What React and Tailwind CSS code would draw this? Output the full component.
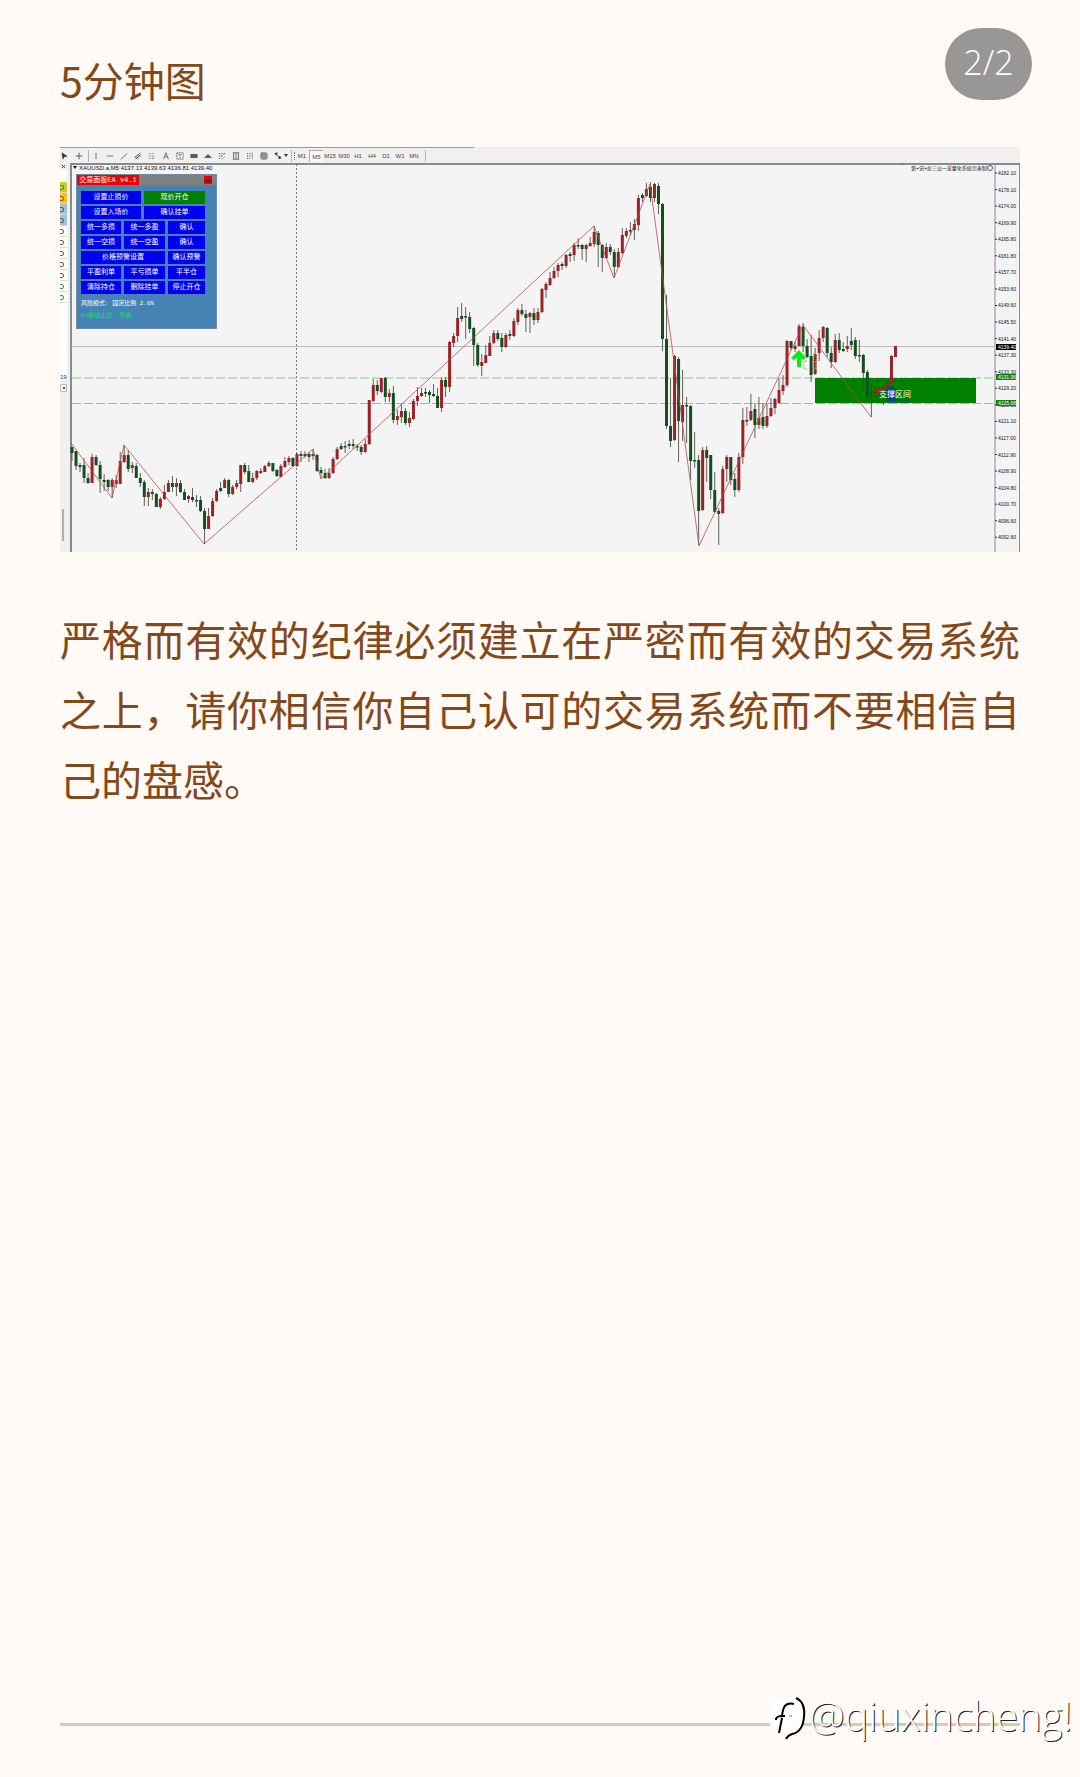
import { Grid3x3, MousePointer2, Plus, X } from 'lucide-react';

// Each candle: [direction, high, body top, body bottom, low], in chart units
const CANDLES = [
  ['g', 447, 447, 453, 461], ['g', 451, 451, 466, 470], ['g', 463, 465, 467, 472], ['g', 458, 465, 478, 483],
  ['g', 473, 478, 483, 484], ['r', 454, 457, 483, 483], ['g', 455, 457, 465, 466], ['g', 461, 465, 479, 493],
  ['g', 474, 480, 482, 491], ['g', 479, 480, 487, 491], ['r', 478, 480, 487, 498], ['r', 475, 480, 484, 488],
  ['r', 452, 461, 484, 484], ['r', 445, 455, 462, 463], ['g', 450, 455, 469, 472], ['r', 462, 465, 468, 473],
  ['g', 463, 466, 478, 478], ['g', 473, 478, 483, 487], ['g', 480, 482, 497, 506], ['r', 488, 492, 497, 506],
  ['g', 489, 492, 494, 500], ['g', 493, 494, 507, 507], ['r', 497, 499, 507, 509], ['r', 485, 492, 499, 500],
  ['r', 480, 483, 492, 492], ['g', 476, 483, 487, 492], ['r', 478, 483, 487, 496], ['g', 480, 483, 492, 493],
  ['g', 489, 492, 500, 500], ['r', 495, 496, 499, 503], ['g', 488, 497, 500, 502], ['g', 495, 500, 501, 507],
  ['g', 496, 500, 511, 512], ['g', 508, 511, 529, 544], ['r', 508, 516, 529, 529], ['r', 498, 501, 516, 517],
  ['r', 489, 491, 501, 502], ['g', 482, 488, 491, 492], ['r', 478, 480, 488, 488], ['g', 479, 480, 494, 497],
  ['r', 485, 487, 494, 495], ['r', 480, 483, 487, 489], ['r', 465, 465, 484, 492], ['g', 463, 465, 472, 474],
  ['g', 465, 471, 482, 482], ['r', 473, 478, 482, 483], ['r', 470, 471, 478, 480], ['r', 468, 471, 473, 474],
  ['r', 465, 466, 472, 472], ['r', 461, 463, 466, 467], ['g', 463, 463, 471, 472], ['g', 469, 470, 476, 477],
  ['r', 464, 466, 477, 477], ['r', 457, 461, 467, 468], ['r', 456, 458, 462, 465], ['g', 457, 458, 466, 467],
  ['r', 453, 454, 466, 467], ['g', 451, 454, 456, 462], ['g', 451, 454, 456, 458], ['g', 452, 454, 457, 462],
  ['r', 449, 454, 456, 460], ['g', 454, 455, 471, 472], ['g', 467, 470, 473, 478], ['g', 469, 473, 478, 479],
  ['r', 468, 473, 478, 479], ['r', 457, 459, 473, 474], ['r', 447, 449, 459, 460], ['g', 443, 446, 449, 450],
  ['g', 441, 446, 447, 453], ['g', 440, 444, 446, 449], ['g', 439, 444, 446, 449], ['g', 444, 446, 447, 451],
  ['g', 445, 447, 452, 455], ['r', 439, 444, 452, 453], ['r', 400, 400, 444, 445], ['r', 379, 385, 401, 402],
  ['g', 380, 385, 391, 395], ['r', 378, 378, 392, 393], ['g', 377, 378, 397, 402], ['r', 389, 393, 397, 402],
  ['g', 386, 393, 420, 423], ['r', 410, 416, 420, 425], ['r', 404, 411, 417, 423], ['g', 408, 411, 423, 425],
  ['r', 412, 418, 423, 427], ['r', 399, 401, 419, 420], ['r', 387, 396, 401, 406], ['r', 388, 393, 396, 397],
  ['g', 388, 392, 393, 397], ['g', 390, 392, 395, 403], ['g', 384, 394, 396, 397], ['g', 388, 396, 408, 408],
  ['r', 377, 380, 408, 412], ['g', 377, 380, 387, 397], ['r', 341, 342, 387, 392], ['r', 333, 336, 343, 347],
  ['r', 307, 318, 336, 342], ['g', 303, 316, 319, 322], ['g', 307, 316, 317, 339], ['g', 312, 317, 329, 333],
  ['g', 327, 328, 345, 366], ['g', 343, 345, 365, 367], ['r', 354, 362, 366, 376], ['r', 345, 355, 363, 363],
  ['r', 336, 343, 356, 356], ['r', 330, 333, 343, 344], ['g', 330, 333, 339, 341], ['g', 333, 338, 347, 352],
  ['r', 333, 335, 347, 348], ['g', 330, 334, 336, 340], ['r', 318, 321, 336, 337], ['r', 308, 310, 322, 325],
  ['g', 304, 310, 314, 316], ['g', 310, 314, 318, 332], ['r', 312, 313, 317, 333], ['g', 308, 313, 320, 325],
  ['r', 308, 312, 320, 323], ['r', 288, 289, 312, 313], ['r', 282, 284, 290, 298], ['r', 272, 278, 285, 286],
  ['r', 267, 271, 278, 279], ['r', 263, 265, 271, 277], ['g', 262, 264, 266, 270], ['r', 254, 255, 266, 268],
  ['g', 252, 254, 256, 262], ['r', 243, 245, 255, 261], ['g', 238, 245, 246, 249], ['g', 244, 245, 249, 260],
  ['r', 244, 245, 249, 262], ['r', 237, 243, 246, 247], ['r', 226, 232, 244, 247], ['g', 231, 233, 245, 267],
  ['g', 244, 245, 258, 272], ['r', 243, 247, 258, 259], ['g', 244, 247, 252, 255], ['g', 249, 252, 267, 278],
  ['r', 248, 252, 267, 268], ['r', 228, 235, 253, 254], ['r', 228, 231, 236, 238], ['g', 222, 230, 231, 235],
  ['r', 219, 224, 230, 240], ['r', 195, 198, 225, 231], ['g', 193, 195, 198, 202], ['r', 183, 189, 196, 197],
  ['g', 182, 187, 198, 202], ['r', 183, 184, 198, 202], ['g', 183, 186, 204, 214], ['g', 203, 204, 339, 351],
  ['g', 295, 339, 426, 429], ['g', 378, 426, 441, 447], ['r', 355, 356, 440, 441], ['g', 357, 359, 421, 462],
  ['r', 370, 405, 422, 441], ['g', 397, 405, 406, 443], ['g', 405, 406, 461, 480], ['g', 432, 460, 461, 468],
  ['g', 455, 460, 511, 545], ['r', 447, 450, 510, 511], ['g', 446, 450, 458, 482], ['g', 455, 455, 490, 499],
  ['g', 472, 490, 512, 513], ['g', 508, 511, 514, 545], ['r', 466, 469, 513, 514], ['r', 455, 457, 469, 482],
  ['g', 457, 457, 480, 485], ['g', 473, 479, 490, 497], ['r', 453, 457, 490, 492], ['r', 408, 420, 457, 464],
  ['g', 407, 420, 421, 426], ['r', 394, 411, 420, 421], ['g', 403, 409, 425, 438], ['r', 397, 418, 425, 429],
  ['g', 403, 417, 426, 429], ['r', 403, 416, 426, 428], ['r', 398, 408, 416, 417], ['r', 398, 399, 408, 414],
  ['r', 378, 390, 403, 404], ['r', 375, 385, 391, 395], ['r', 340, 341, 385, 387], ['g', 341, 341, 348, 350],
  ['r', 342, 346, 349, 352], ['r', 324, 326, 346, 346], ['g', 323, 327, 346, 352], ['g', 339, 346, 357, 358],
  ['g', 335, 356, 375, 382], ['r', 348, 354, 374, 375], ['r', 330, 338, 353, 361], ['r', 326, 327, 338, 342],
  ['g', 327, 328, 353, 357], ['g', 347, 353, 362, 368], ['r', 334, 340, 362, 363], ['g', 333, 340, 350, 353],
  ['g', 342, 349, 351, 352], ['r', 336, 346, 349, 352], ['g', 328, 341, 345, 350], ['g', 337, 340, 356, 359],
  ['g', 340, 355, 356, 362], ['g', 354, 355, 373, 387], ['g', 370, 372, 396, 400], ['g', 385, 395, 396, 417],
  ['r', 387, 390, 394, 398], ['r', 385, 389, 393, 402], ['r', 386, 388, 392, 405], ['r', 380, 383, 388, 390],
  ['r', 355, 356, 383, 384], ['r', 346, 346, 357, 357],
];

const FIRST_X = 72;
const STEP = 4.017;

const ZIGZAG = '71,443 112,498 124,445 204,544 313,449 321,479 594,226 614,278 650,184 699,546 803,325 871,417';

const PRICES = [
  '4182.10', '4178.10', '4174.00', '4169.90', '4165.80', '4161.80', '4157.70', '4153.60',
  '4149.60', '4145.50', '4141.40', '4137.30', '4133.30', '4129.20', '4125.10', '4121.10',
  '4117.00', '4112.90', '4108.90', '4104.80', '4100.70', '4096.60', '4092.60',
];

const PRICE_TAGS = [
  { y: 347, label: '4139.40', fill: '#000' },
  { y: 377, label: '4131.96', fill: '#128012' },
  { y: 403, label: '4125.68', fill: '#128012' },
];

const PANEL_ROWS = [
  { cols: 'grid-cols-[60px_61px]', labels: ['设置止损价', '现价开仓'] },
  { cols: 'grid-cols-[60px_61px]', labels: ['设置入场价', '确认挂单'] },
  { cols: 'grid-cols-[40px_41px_37px]', labels: ['统一多损', '统一多盈', '确认'] },
  { cols: 'grid-cols-[40px_41px_37px]', labels: ['统一空损', '统一空盈', '确认'] },
  { cols: 'grid-cols-[84px_37px]', labels: ['价格预警设置', '确认预警'] },
  { cols: 'grid-cols-[40px_41px_37px]', labels: ['平盈利单', '平亏损单', '平半仓'] },
  { cols: 'grid-cols-[40px_41px_37px]', labels: ['清除持仓', '删除挂单', '停止开仓'] },
];

const TIMEFRAMES = ['M1', 'M5', 'M15', 'M30', 'H1', 'H4', 'D1', 'W1', 'MN'];

const RAIL_ROWS = [
  { bg: 'bg-[#c9cf2a]', dot: 'border-[#6b7a10]' },
  { bg: 'bg-[#fcc419]', dot: 'border-[#b5480f]' },
  { bg: 'bg-[#9cc6e0]', dot: 'border-[#5f5560]' },
  { bg: 'bg-[#9cc6e0]', dot: 'border-[#5f5560]' },
  { bg: 'bg-white', dot: 'border-[#b0442e]' },
  { bg: 'bg-white', dot: 'border-[#b0442e]' },
  { bg: 'bg-white', dot: 'border-[#b0442e]' },
  { bg: 'bg-white', dot: 'border-[#b0442e]' },
  { bg: 'bg-white', dot: 'border-[#b0442e]' },
  { bg: 'bg-white', dot: 'border-[#3f9a3f]' },
  { bg: 'bg-white', dot: 'border-[#3f9a3f]' },
];

// Small drawing-tool glyphs, each on a 10x10 grid
const TOOLS = [
  { name: '垂直线', d: 'M5 1V9' },
  { name: '水平线', d: 'M1 5H9' },
  { name: '趋势线', d: 'M1 9L9 2' },
  { name: '通道', d: 'M1 7L8 1M2 9L9 3M3 5L6 8M5 3L8 6M1 5L4 9' },
  { name: '斐波那契', d: 'M1 2H9M1 5H9M1 8H7M7 6V9', dash: '1 1' },
  { name: '文字', d: 'M2 9L5 1L8 9M3 6H7' },
  { name: '文字标签', d: 'M1 1H9V9H1ZM3 3H7M5 3V8', dash: '2 1' },
  { name: '矩形', d: 'M1 3H9V7H1Z', fill: '#555' },
  { name: '三角形', d: 'M5 3L9 7H1Z', fill: '#555' },
  { name: '扇形', d: 'M1 2H9M1 5H5M1 9L8 2M5 9L9 5', dash: '2 1' },
  { name: '周期线', d: 'M2 1V9M5 1V9M8 1V9M1 1H9M1 9H9' },
  { name: '时间区', d: 'M2 1V6M5 1V6M8 1V9M1 8H5', dash: '2 1' },
];

function ToolIcon({ tool }) {
  return (
    <svg viewBox="0 0 10 10" className="size-[8px]" fill={tool.fill || 'none'} stroke="#555" strokeDasharray={tool.dash}>
      <path d={tool.d} />
    </svg>
  );
}

function Toolbar() {
  return (
    <div className="flex h-4 items-center bg-[#f0f0f0] font-['Liberation_Sans',sans-serif] text-[6px] text-[#444]">
      <div className="flex h-full items-center border-t border-[#9a9a9a] pr-12">
        <button aria-label="光标" className="flex w-3 justify-start">
          <MousePointer2 className="size-[8px] rotate-12" fill="#333" />
        </button>
        <button aria-label="十字线" className="flex w-[14px] justify-center">
          <Plus className="size-[10px]" strokeWidth={2} />
        </button>
        <span className="ml-[2px] h-3 border-l border-[#b5b5b5]" />
        {TOOLS.map(tool => (
          <button key={tool.name} aria-label={tool.name} className="flex w-[14px] justify-center">
            <ToolIcon tool={tool} />
          </button>
        ))}
        <button aria-label="网格" className="flex w-[14px] justify-center">
          <Grid3x3 className="size-[8px]" strokeWidth={2} />
        </button>
        <button aria-label="箭头" className="flex w-5 items-center justify-center gap-[2px]">
          <svg viewBox="0 0 10 10" className="size-[8px]" fill="#333" stroke="#333">
            <path d="M1 2L4 1L3 4ZM3 3L6 6M6 6H8V8H6Z" />
          </svg>
          <svg viewBox="0 0 4 3" className="h-[3px] w-1">
            <path d="M0 0H4L2 3Z" fill="#333" />
          </svg>
        </button>
        <span className="h-3 border-l border-[#b5b5b5]" />
        <span className="ml-[2px] h-2 border-l border-dotted border-[#777]" />
        {TIMEFRAMES.map(tf => (
          <button
            key={tf}
            className={`h-3 w-[14px] text-center leading-[12px] ${tf === 'M5' ? 'border-t border-l border-[#aaa] bg-[#f8f8f8]' : ''}`}
          >
            {tf}
          </button>
        ))}
        <span className="ml-1 h-3 border-l border-[#b5b5b5]" />
      </div>
    </div>
  );
}

function SideRail() {
  return (
    <div className="flex w-[10px] shrink-0 flex-col bg-[#f0f0f0] pr-[3px] text-[#333]">
      <button aria-label="关闭" className="flex h-[7px] items-center justify-center">
        <X className="size-[5px]" strokeWidth={4} />
      </button>
      <div className="h-[210px] bg-white pt-[12px]">
        {RAIL_ROWS.map((row, i) => (
          <div key={i} className={`flex h-[11px] items-center border-b border-[#dcdcb8] ${row.bg}`}>
            <span className={`h-[5px] w-[4px] rounded-r-full border border-l-0 ${row.dot}`} />
          </div>
        ))}
        <p className="pt-[69px] font-['Liberation_Sans',sans-serif] text-[6px] leading-[10px]">19</p>
      </div>
      <button aria-label="关闭导航" className="mt-1 flex h-[8px] items-center justify-center border border-[#bbb] bg-white">
        <X className="size-[4px]" strokeWidth={5} />
      </button>
      <div className="ml-[2px] mt-auto mb-[11px] h-8 w-[2px] bg-[#b0b0b0]" />
    </div>
  );
}

function Candle({ index, candle }) {
  const [dir, high, top, bottom, low] = candle;
  const x = FIRST_X + index * STEP;
  const color = dir === 'r' ? '#9c2226' : '#12501f';
  return (
    <g>
      <line x1={x} x2={x} y1={high} y2={low} stroke="#3a3a36" strokeWidth="0.8" />
      <rect x={x - 1.5} y={top} width="3" height={Math.max(bottom - top, 1.5)} fill={color} />
    </g>
  );
}

function PriceChart() {
  return (
    <svg
      viewBox="70 163 950 389"
      className="block w-full font-['Liberation_Sans','Noto_Sans_CJK_SC',sans-serif]"
      role="img"
      aria-label="XAUUSD 5分钟K线图"
    >
      <rect x="70" y="163" width="950" height="389" fill="#f4f4f4" />
      <path d="M71 552V164H1020" fill="none" stroke="#8a8a8a" strokeWidth="2" />
      <path d="M995 163V552M1019.500 163V552" stroke="#8a8a8a" />
      <text x="79" y="170" fontSize="6" fill="#111">XAUUSD.a,M5  4137.13 4139.63 4136.81 4139.40</text>
      <path d="M73 166H77L75 169Z" fill="#111" />
      <text x="911" y="170" fontSize="5" fill="#111">第+记+总三公一采量化系统完善制</text>
      <circle cx="990" cy="168" r="2.500" fill="none" stroke="#333" strokeWidth="0.8" />
      <path d="M899 163H904L901.500 165Z" fill="#777" />

      <line x1="296.500" x2="296.500" y1="164" y2="552" stroke="#777" strokeDasharray="2 2" />
      <line x1="71" x2="995" y1="346.500" y2="346.500" stroke="#bcbcbc" />
      <line x1="72" x2="995" y1="378" y2="378" stroke="#8fc48f" strokeDasharray="9 3" />
      <line x1="72" x2="995" y1="403.500" y2="403.500" stroke="#8fc48f" strokeDasharray="9 3" />

      <rect x="815" y="378" width="161" height="25" fill="#008000" />
      {CANDLES.map((candle, i) => (
        <Candle key={i} index={i} candle={candle} />
      ))}
      <polyline points={ZIGZAG} fill="none" stroke="#b0504e" strokeWidth="0.8" />
      <path d="M799 350L806 358L803 360L801 358V367H797V358L794 360L791 358Z" fill="#0be81b" />
      <path d="M805 353V358M807 361H804V369H808M814 353V357M812 362H816V369H812" fill="none" stroke="#7fd068" strokeDasharray="2 1" />
      <path d="M891 386L897 391L895 394V401H887V394L885 391Z" fill="#0a3a9a" />
      <path d="M896 400H909" stroke="#0a5a4a" strokeWidth="2" strokeDasharray="3 1" />
      <text x="879" y="397" fontSize="8" fill="#fff">支撑区间</text>

      {PRICES.map((price, i) => (
        <g key={price}>
          <line x1="995" x2="997" y1={173 + i * 16.56} y2={173 + i * 16.56} stroke="#333" />
          <text x="998" y={175 + i * 16.56} fontSize="5" fill="#111">{price}</text>
        </g>
      ))}
      {PRICE_TAGS.map(tag => (
        <g key={tag.label}>
          <rect x="996" y={tag.y - 3} width="20" height="6" fill={tag.fill} />
          <text x="998" y={tag.y + 2} fontSize="5" fill="#fff">{tag.label}</text>
        </g>
      ))}
    </svg>
  );
}

function TradePanel() {
  return (
    <div className="absolute left-4 top-[27px] w-[141px] border border-[#6f8ba0] bg-[#4682b4] font-['Liberation_Mono','Noto_Sans_CJK_SC',monospace] text-[7px] leading-[10px] text-white">
      <div className="flex h-[10px] items-center justify-between bg-[#808080] pr-1">
        <span className="w-[62px] bg-[#f00000] text-center whitespace-nowrap">交易面板EA v4.1</span>
        <button aria-label="最小化" className="flex h-2 w-2 items-center justify-center bg-[#e00000]">
          <span className="h-px w-1 bg-black" />
        </button>
      </div>
      <div className="space-y-[2px] px-1 pt-[6px]">
        {PANEL_ROWS.map((row, i) => (
          <div key={i} className={`grid gap-[3px] ${row.cols}`}>
            {row.labels.map(label => (
              <button
                key={label}
                className={`h-[13px] text-center leading-[13px] whitespace-nowrap ${label === '现价开仓' ? 'bg-[#008000]' : 'bg-[#0000f0]'}`}
              >
                {label}
              </button>
            ))}
          </div>
        ))}
      </div>
      <div className="px-1 pt-1 pb-[6px] text-[6px] leading-[12px]">
        <p>风险模式: 固定比例 2.0%</p>
        <p className="text-[#00e860]">H4移动止损: 开启</p>
      </div>
    </div>
  );
}

function Watermark() {
  return (
    <div className="flex items-center gap-[2px] font-['Open_Sans','Noto_Sans',sans-serif] text-[40px] leading-[48px] font-light text-white [text-shadow:1px_1px_0_#222]">
      <svg viewBox="0 0 40 46" className="mt-1 h-[46px] w-[40px]">
        <path
          d="M19 2C31 1 38 9 37 22C36 33 31 38 24 39C21 40 20 42 19 44L18 38C7 37 1 31 1 21C1 9 8 3 19 2Z"
          fill="#fff"
        />
        <path d="M29 3C36 6 38 13 37 22C36 33 31 38 25 39C22 40 20 42 19 44" fill="none" stroke="#000" strokeWidth="2" />
        <path d="M27 9C19 7 16 11 15 21M9 24C10 21 12 21 18 21M15 23L12 38M9 23V25" fill="none" stroke="#000" strokeWidth="2" />
        <path d="M22 21H25" stroke="#777" />
      </svg>
      <span>@qiuxincheng!</span>
    </div>
  );
}

export default function App() {
  return (
    <main className="relative flex min-h-screen flex-col bg-[#fffaf5] px-[60px] pt-[44px] font-['Noto_Sans_CJK_SC',sans-serif] text-[#84491b]">
      <h1 className="text-[41px] leading-[70px]">5分钟图</h1>

      <span className="absolute right-12 top-7 flex h-[72px] w-[87px] justify-center rounded-full bg-[#999696] font-['Open_Sans','Noto_Sans',sans-serif] text-[34px] leading-[68px] font-light text-white">
        2/2
      </span>

      <figure className="relative mt-[33px]">
        <Toolbar />
        <div className="flex">
          <SideRail />
          <div className="min-w-0 flex-1">
            <PriceChart />
          </div>
        </div>
        <TradePanel />
      </figure>

      <p className="mt-[51px] text-justify text-[41px] leading-[70px]">
        严格而有效的纪律必须建立在严密而有效的交易系统之上，请你相信你自己认可的交易系统而不要相信自己的盘感。
      </p>

      <footer className="mt-auto pb-[51px]">
        <hr className="border-t-[3px] border-[#dfc7b0]" />
      </footer>
      <div className="absolute right-2 bottom-9">
        <Watermark />
      </div>
    </main>
  );
}
